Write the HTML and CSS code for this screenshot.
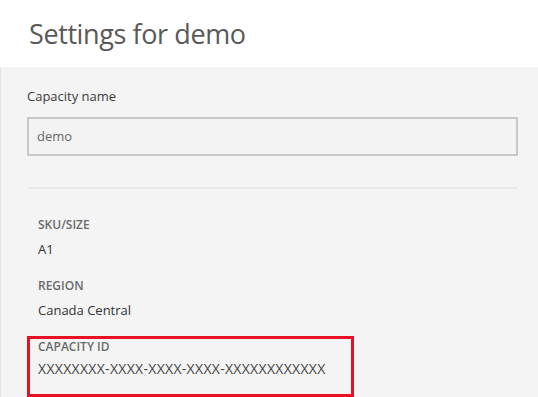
FILE: index.html
```html
<!DOCTYPE html>
<html lang="en">
<head>
<meta charset="utf-8">
<title>Settings for demo</title>
<link rel="stylesheet" href="styles.css">
</head>
<body>
<div class="page">
  <header class="header">
    <h1 class="title">Settings for demo</h1>
  </header>
  <main class="panel">
    <label class="field-label" for="cap-name">Capacity name</label>
    <div class="input" id="cap-name">demo</div>
    <hr class="divider">
    <div class="details">
      <div class="field">
        <div class="label">SKU/SIZE</div>
        <div class="value">A1</div>
      </div>
      <div class="field">
        <div class="label">REGION</div>
        <div class="value">Canada Central</div>
      </div>
      <div class="field highlight">
        <div class="label">CAPACITY ID</div>
        <div class="value id">XXXXXXXX-XXXX-XXXX-XXXX-XXXXXXXXXXXX</div>
      </div>
    </div>
  </main>
</div>
</body>
</html>
```
FILE: styles.css
```css
html, body {
  margin: 0;
  padding: 0;
  background: #ffffff;
}
body {
  font-family: "Open Sans", "Noto Sans", sans-serif;
  color: #333333;
  width: 538px;
  height: 397px;
  overflow: hidden;
}
.page {
  display: flex;
  flex-direction: column;
  height: 397px;
}
.header {
  height: 68px;
  box-sizing: border-box;
  padding: 16px 0 0 29px;
  background: #ffffff;
}
.title {
  margin: 0;
  font-size: 27px;
  letter-spacing: -0.4px;
  line-height: 36px;
  font-weight: 400;
  color: #595959;
}
.panel {
  flex: 1;
  background: #f4f4f4;
  border-left: 1px solid #e4e4e4;
  padding: 19px 20px 0 26px;
  display: flex;
  flex-direction: column;
}
.field-label {
  font-size: 13px;
  line-height: 20px;
  color: #3b3b3b;
}
.input {
  margin-top: 11px;
  height: 39px;
  box-sizing: border-box;
  border: 2px solid #c8c8c8;
  background: #f3f3f3;
  padding: 7px 8px 0 8px;
  font-size: 13px;
  line-height: 20px;
  color: #666666;
}
.divider {
  margin: 31px 0 0 1px;
  border: 0;
  height: 2px;
  background: #e9e9e9;
}
.details {
  margin-top: 30px;
  padding-left: 11px;
  display: flex;
  flex-direction: column;
  gap: 21px;
}
.label {
  font-size: 12px;
  line-height: 12px;
  font-weight: 600;
  color: #6b6b6b;
}
.value {
  margin-top: 8px;
  font-size: 13px;
  line-height: 20px;
  color: #333333;
}
.highlight {
  margin-top: -5px;
  margin-left: -11px;
  width: 327px;
  box-sizing: border-box;
  border: 3px solid #e81123;
  padding: 2px 8px 15px 8px;
}
.id {
  margin-top: 6px;
  font-size: 14px;
  letter-spacing: 0.3px;
  color: #444444;
}
```
